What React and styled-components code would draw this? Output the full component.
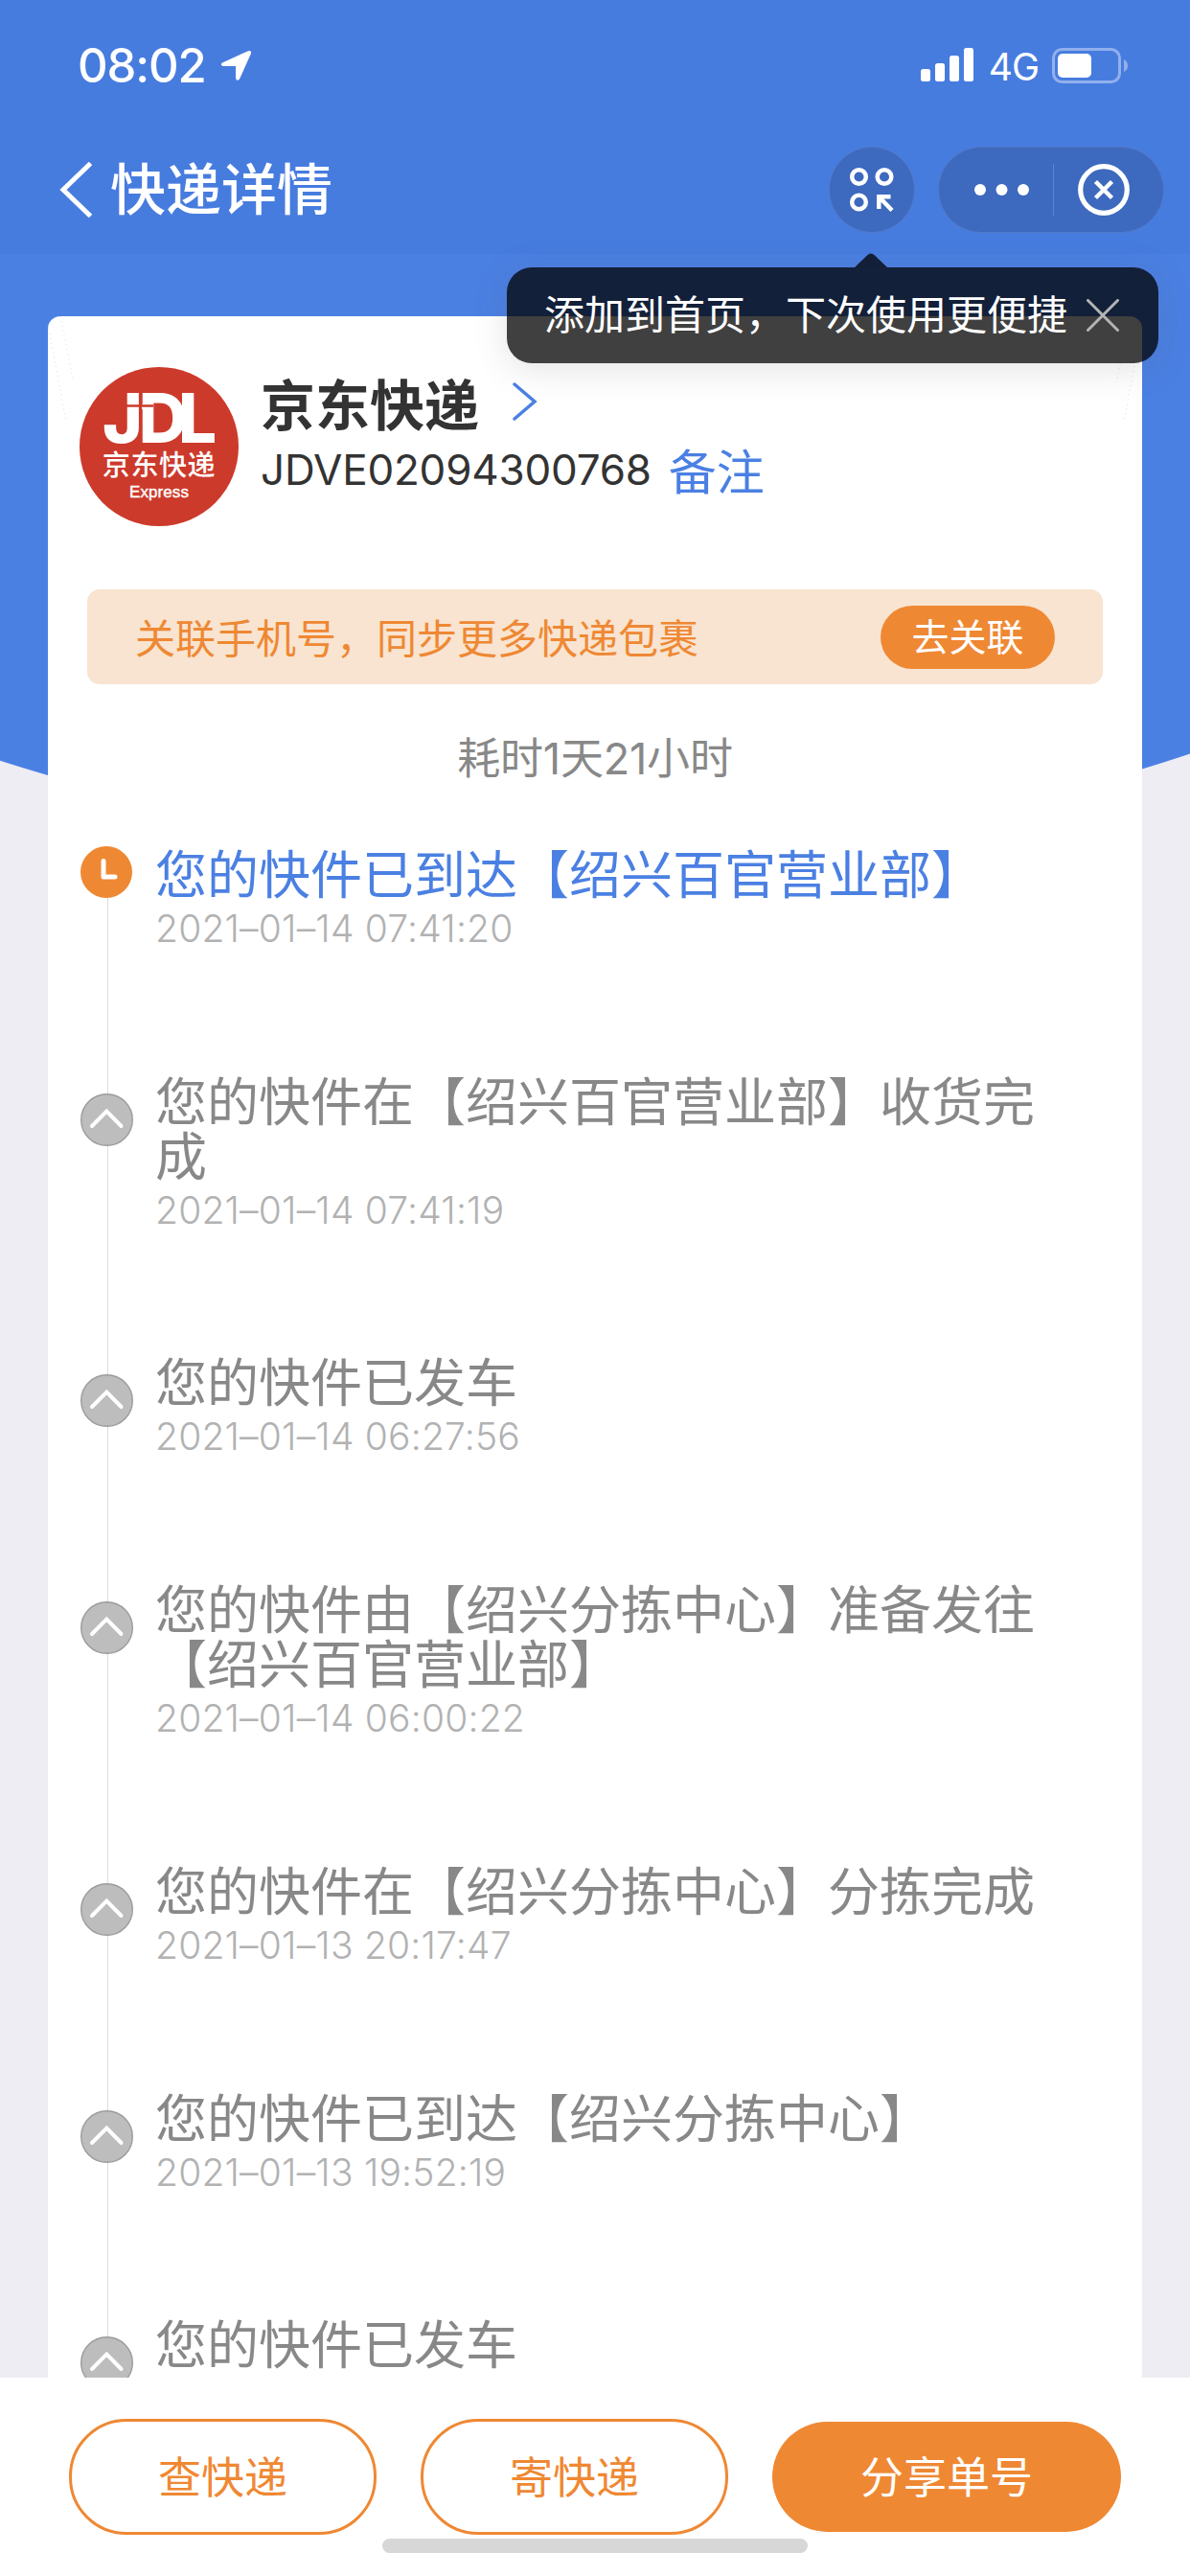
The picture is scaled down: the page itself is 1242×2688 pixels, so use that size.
import React from "react";
import styled, { createGlobalStyle } from "styled-components";

const GlobalStyle = createGlobalStyle`
  * {
    box-sizing: border-box;
  }
  body {
    margin: 0;
    font-family: Inter, "Noto Sans CJK SC", sans-serif;
    text-spacing-trim: space-all;
  }
  button {
    font-family: inherit;
    padding: 0;
    border: none;
    background: none;
  }
`;

const Page = styled.div`
  display: flex;
  flex-direction: column;
  width: 1242px;
  height: 2688px;
  overflow: hidden;
  background: radial-gradient(
    circle at 610px -1111px,
    #4b80e3 1999.5px,
    #eeedf3 2000.5px
  );
`;

const TopBar = styled.header`
  height: 265px;
  flex: none;
  background: #477cdf;
  color: white;
`;

const StatusBar = styled.div`
  height: 136px;
  padding: 0 64px 0 81px;
  display: flex;
  align-items: center;
  justify-content: space-between;
`;

const StatusGroup = styled.div`
  display: flex;
  align-items: center;
`;

const Clock = styled.span`
  font-size: 49px;
  font-weight: 500;
  letter-spacing: -1.1px;
  margin-right: 15px;
`;

const Network = styled.span`
  font-size: 39px;
  margin: 2px 14px 0 15px;
  letter-spacing: -1px;
`;

const NavBar = styled.div`
  height: 124px;
  padding: 0 27px 0 62px;
  display: flex;
  align-items: center;
`;

const Title = styled.h1`
  flex: 1;
  margin: 0 0 0 17px;
  font-size: 58px;
  line-height: 84px;
  font-weight: 500;
`;

const RoundBtn = styled.button`
  width: 90px;
  height: 90px;
  border-radius: 50%;
  margin-right: 24px;
  background: #3d69be;
  border: 1px solid #5077c3;
  display: flex;
  align-items: center;
  justify-content: center;
`;

const Capsule = styled.div`
  width: 236px;
  height: 90px;
  border-radius: 45px;
  background: #3d69be;
  border: 1px solid #5077c3;
  display: flex;
  align-items: center;
`;

const CapsuleBtn = styled.button`
  flex: 1;
  height: 54px;
  display: flex;
  align-items: center;
  justify-content: center;
  border-left: ${(props) => (props.$divided ? "1px solid #5c84d0" : "none")};
  padding-right: ${(props) => (props.$divided ? "9px" : "0")};
  padding-left: ${(props) => (props.$divided ? "0" : "13px")};
`;

const Tooltip = styled.div`
  position: absolute;
  z-index: 2;
  top: 279px;
  left: 529px;
  width: 680px;
  height: 100px;
  padding: 0 41px 0 39px;
  border-radius: 26px;
  background: rgba(0, 0, 0, 0.75);
  box-shadow: 0 6px 36px rgba(80, 80, 80, 0.16);
  color: white;
  display: flex;
  align-items: center;
  justify-content: space-between;
  font-size: 42px;
  line-height: 60px;
  white-space: nowrap;
`;

const TooltipArrow = styled.svg`
  position: absolute;
  top: -15px;
  left: 363px;
`;

const Card = styled.main`
  position: relative;
  flex: 1;
  min-height: 0;
  overflow: hidden;
  margin: 65px 50px 0;
  background: white;
  border-radius: 13px 13px 0 0;
`;

const CornerLines = styled.svg`
  position: absolute;
  top: 0;
  left: 0;
`;

const Company = styled.section`
  display: flex;
  padding: 53px 33px 0;
  height: 285px;
`;

const Logo = styled.div`
  width: 166px;
  height: 166px;
  border-radius: 50%;
  background: #cc3a2b;
  color: white;
  display: flex;
  flex-direction: column;
  align-items: center;
  padding-top: 26px;
`;

const LogoMark = styled.svg`
  overflow: visible;
  font-family: Inter, sans-serif;
  font-size: 71px;
  font-weight: 800;
  fill: white;
`;

const LogoName = styled.span`
  font-size: 29px;
  line-height: 30px;
  font-weight: 500;
  letter-spacing: 0.6px;
  margin-top: 4px;
`;

const LogoSub = styled.span`
  font-family: "Liberation Sans", sans-serif;
  font-size: 17px;
  line-height: 20px;
  letter-spacing: 0.1px;
  margin-top: 3px;
  -webkit-text-stroke: 0.4px white;
`;

const CompanyInfo = styled.div`
  padding-left: 23px;
  color: #333;
`;

const CompanyName = styled.div`
  display: flex;
  align-items: center;
  height: 78px;
  margin-top: -3px;
  gap: 35px;
  font-size: 57px;
  font-weight: 700;
`;

const Waybill = styled.div`
  display: flex;
  align-items: center;
  height: 60px;
  margin-top: 1px;
  gap: 18px;
  font-size: 44px;
  white-space: nowrap;
`;

const WaybillNo = styled.span`
  letter-spacing: -0.2px;
  padding-top: 2px;
`;

const Remark = styled.a`
  font-size: 50px;
  color: #4b80e3;
`;

const Banner = styled.div`
  display: flex;
  align-items: center;
  justify-content: space-between;
  height: 99px;
  margin: 0 41px;
  padding: 0 50px;
  border-radius: 13px;
  background: #f8e4d0;
`;

const BannerText = styled.span`
  color: #ef8833;
  font-size: 42px;
  padding-bottom: 3px;
`;

const BindBtn = styled.button`
  width: 182px;
  height: 66px;
  border-radius: 33px;
  background: #ef8833;
  color: white;
  font-size: 39px;
  line-height: 60px;
`;

const Duration = styled.div`
  height: 169px;
  line-height: 155px;
  text-align: center;
  font-size: 45px;
  letter-spacing: -0.2px;
  color: #888;
`;

const Step = styled.div`
  display: flex;
  padding-left: 33px;
`;

const StepRail = styled.div`
  width: 79px;
  flex: none;
  background: linear-gradient(#ddd, #ddd) 29px 0 / 1px 100% no-repeat;
  background-position-y: ${(props) => (props.$first ? "30px" : "0")};
`;

const StepIcon = styled.svg`
  display: block;
  margin-top: ${(props) => (props.$first ? "0" : "21px")};
`;

const StepBody = styled.div`
  width: 940px;
  padding-bottom: 124px;
`;

const StepText = styled.div`
  padding-top: 2px;
  font-size: 54px;
  line-height: 57px;
  color: ${(props) => (props.$first ? "#4b80e3" : "#888")};
`;

const StepTime = styled.div`
  font-size: 39px;
  font-weight: 350;
  line-height: 53.7px;
  letter-spacing: 0.2px;
  color: #b2b2b2;
`;

const Footer = styled.footer`
  height: 207px;
  flex: none;
  background: white;
  display: flex;
  flex-direction: column;
  align-items: center;
  padding-top: 43px;
`;

const Actions = styled.div`
  display: flex;
  align-items: center;
  gap: 46px;
`;

const ActionBtn = styled.button`
  width: ${(props) => (props.$primary ? "364px" : "321px")};
  height: ${(props) => (props.$primary ? "115px" : "121px")};
  padding-bottom: 4px;
  border-radius: 60px;
  border: ${(props) => (props.$primary ? "none" : "3px solid #ef8833")};
  background: ${(props) => (props.$primary ? "#ef8833" : "white")};
  color: ${(props) => (props.$primary ? "white" : "#ef8833")};
  font-size: 45px;
`;

const HomeIndicator = styled.div`
  width: 444px;
  height: 15px;
  margin-top: 4px;
  border-radius: 8px;
  background: #d7d7d7;
`;

const steps = [
  { text: "您的快件已到达【绍兴百官营业部】", time: "2021–01–14 07:41:20" },
  { text: "您的快件在【绍兴百官营业部】收货完成", time: "2021–01–14 07:41:19" },
  { text: "您的快件已发车", time: "2021–01–14 06:27:56" },
  {
    text: "您的快件由【绍兴分拣中心】准备发往【绍兴百官营业部】",
    time: "2021–01–14 06:00:22",
  },
  { text: "您的快件在【绍兴分拣中心】分拣完成", time: "2021–01–13 20:17:47" },
  { text: "您的快件已到达【绍兴分拣中心】", time: "2021–01–13 19:52:19" },
  { text: "您的快件已发车" },
];

function ClockIcon() {
  return (
    <StepIcon $first width="56" height="54" viewBox="0 0 56 54">
      <circle cx="28" cy="27" r="27" fill="#ef8833" />
      <path
        d="M25 15.5V32H37"
        fill="none"
        stroke="white"
        strokeWidth="5"
        strokeLinecap="round"
        strokeLinejoin="round"
      />
    </StepIcon>
  );
}

function UpIcon() {
  return (
    <StepIcon width="56" height="55" viewBox="0 0 56 55">
      <circle cx="28.5" cy="27.5" r="26.8" fill="#bdbdbd" stroke="#9c9c9c" strokeWidth="1.4" />
      <path
        d="M13 34L28.3 18.5L43.5 34"
        fill="none"
        stroke="white"
        strokeWidth="4"
        strokeLinecap="round"
      />
    </StepIcon>
  );
}

function App() {
  return (
    <>
      <GlobalStyle />
      <Page>
        <TopBar>
          <StatusBar>
            <StatusGroup>
              <Clock>08:02</Clock>
              <svg width="33" height="33" viewBox="0 0 33 33">
                <path
                  d="M2 13.5L29 1.2Q33 0 31.8 4.2L20 30.5Q17 33.5 16 29.5V17H3Q-1 16 2 13.5Z"
                  fill="white"
                />
              </svg>
            </StatusGroup>
            <StatusGroup>
              <svg width="56" height="36" viewBox="0 0 56 36" fill="white">
                <rect x="0" y="22" width="10" height="13" rx="2.5" />
                <rect x="15" y="16" width="10" height="19" rx="2.5" />
                <rect x="30" y="8" width="10" height="27" rx="2.5" />
                <rect x="45" y="0" width="10" height="35" rx="2.5" />
              </svg>
              <Network>4G</Network>
              <svg width="80" height="37" viewBox="0 0 80 37">
                <rect
                  x="1.5"
                  y="1.5"
                  width="69"
                  height="34"
                  rx="9"
                  fill="none"
                  stroke="#91b0ec"
                  strokeWidth="3"
                />
                <rect x="6" y="6" width="35" height="25" rx="5" fill="white" />
                <path d="M75 12Q79 14 79 18.5T75 25Z" fill="#91b0ec" />
              </svg>
            </StatusGroup>
          </StatusBar>
          <NavBar>
            <svg width="36" height="58" viewBox="0 0 36 58">
              <path d="M32.5 1.5L4 29L32.5 56.5" fill="none" stroke="white" strokeWidth="5" />
            </svg>
            <Title>快递详情</Title>
            <RoundBtn>
              <svg width="48" height="48" viewBox="0 0 48 48" fill="none" stroke="white">
                <g strokeWidth="4.5">
                  <circle cx="10.5" cy="10.5" r="7.3" />
                  <circle cx="37" cy="10.5" r="7.3" />
                  <circle cx="10.5" cy="37" r="7.3" />
                </g>
                <path d="M31.3 44V31.3H43.5M32 32L45 45.5" strokeWidth="4.5" />
              </svg>
            </RoundBtn>
            <Capsule>
              <CapsuleBtn>
                <svg width="58" height="12" viewBox="0 0 58 12" fill="white">
                  <circle cx="6" cy="6" r="6" />
                  <circle cx="28.5" cy="6" r="6" />
                  <circle cx="51" cy="6" r="6" />
                </svg>
              </CapsuleBtn>
              <CapsuleBtn $divided>
                <svg width="54" height="54" viewBox="0 0 54 54" fill="none" stroke="white">
                  <circle cx="27" cy="27" r="24.3" strokeWidth="5.2" />
                  <path d="M18.5 18.5L35.5 35.5M35.5 18.5L18.5 35.5" strokeWidth="4.5" />
                </svg>
              </CapsuleBtn>
            </Capsule>
          </NavBar>
        </TopBar>

        <Tooltip>
          <TooltipArrow width="34" height="15" viewBox="0 0 34 15">
            <path d="M0 15L13.5 2Q17 -1.2 20.5 2L34 15Z" fill="rgba(0,0,0,0.75)" />
          </TooltipArrow>
          <span>添加到首页，下次使用更便捷</span>
          <svg width="34" height="34" viewBox="0 0 34 34">
            <path
              d="M1.5 1.5L32.5 32.5M32.5 1.5L1.5 32.5"
              stroke="#b4b4b4"
              strokeWidth="3"
              strokeLinecap="round"
            />
          </svg>
        </Tooltip>

        <Card>
          <CornerLines width="1142" height="112" viewBox="0 0 1142 112">
            <path
              d="M0 8L19 110M13 0L26 65M1142 8L1123 110M1129 0L1116 65"
              fill="none"
              stroke="#c3d3f5"
              strokeWidth="0.8"
              strokeDasharray="1 4"
            />
          </CornerLines>
          <Company>
            <Logo>
              <LogoMark width="120" height="58" viewBox="0 0 120 58">
                <text y="53">
                  <tspan x="1">J</tspan>
                  <tspan x="38">D</tspan>
                  <tspan x="80">L</tspan>
                </text>
                {/* cuts between the J and the D */}
                <path d="M24 14.5H40L41.500 12V1M41.500 18V54M40 14.500H54" stroke="#cc3a2b" strokeWidth="2.5" fill="none" />
              </LogoMark>
              <LogoName>京东快递</LogoName>
              <LogoSub>Express</LogoSub>
            </Logo>
            <CompanyInfo>
              <CompanyName>
                京东快递
                <svg width="26" height="40" viewBox="0 0 26 40">
                  <path
                    d="M2 2L23 20L2 38"
                    fill="none"
                    stroke="#4b80e3"
                    strokeWidth="3.5"
                    strokeLinecap="round"
                  />
                </svg>
              </CompanyName>
              <Waybill>
                <WaybillNo>JDVE02094300768</WaybillNo>
                <Remark>备注</Remark>
              </Waybill>
            </CompanyInfo>
          </Company>
          <Banner>
            <BannerText>关联手机号，同步更多快递包裹</BannerText>
            <BindBtn>去关联</BindBtn>
          </Banner>
          <Duration>耗时1天21小时</Duration>
          {steps.map((step, i) => (
            <Step key={i}>
              <StepRail $first={i === 0}>{i === 0 ? <ClockIcon /> : <UpIcon />}</StepRail>
              <StepBody>
                <StepText $first={i === 0}>{step.text}</StepText>
                {step.time && <StepTime>{step.time}</StepTime>}
              </StepBody>
            </Step>
          ))}
        </Card>

        <Footer>
          <Actions>
            <ActionBtn>查快递</ActionBtn>
            <ActionBtn>寄快递</ActionBtn>
            <ActionBtn $primary>分享单号</ActionBtn>
          </Actions>
          <HomeIndicator />
        </Footer>
      </Page>
    </>
  );
}

export default App;
